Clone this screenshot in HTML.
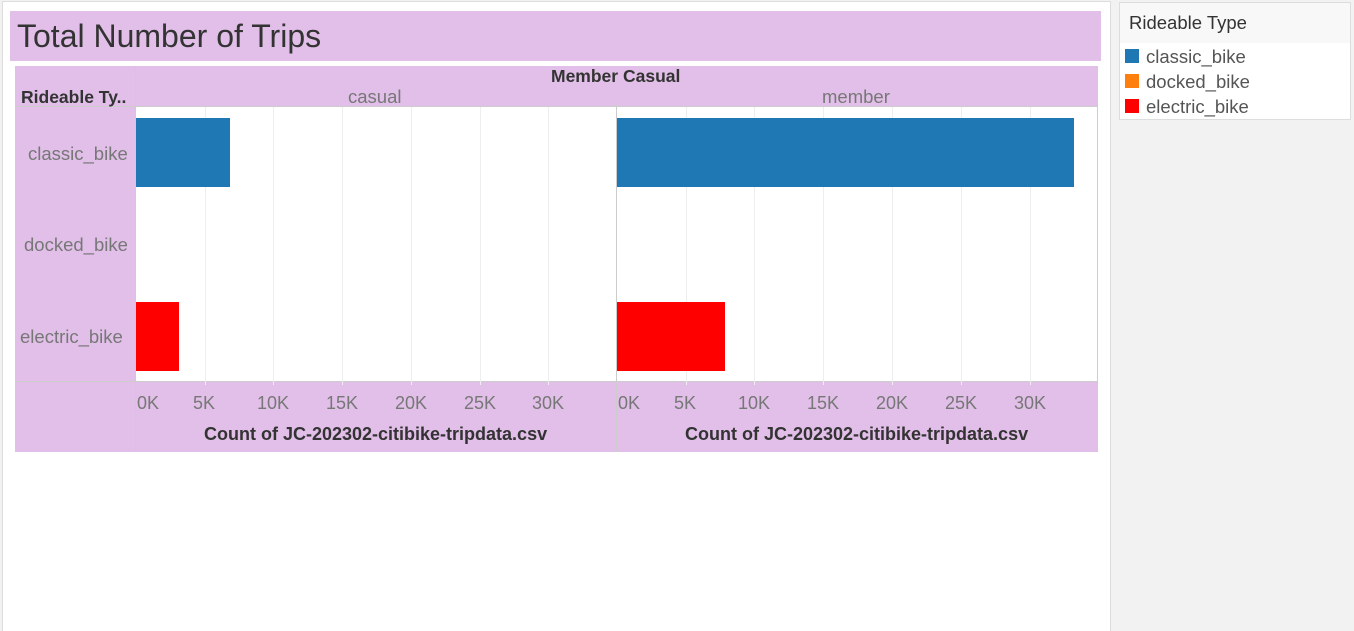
<!DOCTYPE html>
<html><head><style>
*{margin:0;padding:0;box-sizing:border-box}
body{width:1354px;height:631px;background:#f2f2f2;position:relative;overflow:hidden;font-family:"Liberation Sans",sans-serif}
.a{position:absolute}
.t{color:#777;font-size:18.5px;white-space:nowrap}
.x{color:#777;font-size:18px;white-space:nowrap}
</style></head><body>
<div class="a" style="left:2px;top:1px;width:1109px;height:630px;background:#fff;border-left:1px solid #ddd;border-top:1px solid #ddd;border-right:1px solid #ddd"></div>
<div class="a" style="left:10px;top:11px;width:1091px;height:50px;background:#e1bfe8"></div>
<div class="a" style="left:17px;top:18px;font-size:32px;color:#333;font-weight:300">Total Number of Trips</div>
<div class="a" style="left:15px;top:66px;width:1083px;height:386px;background:#e1bfe8"></div>
<div class="a" style="left:135px;top:107px;width:962px;height:274px;background:#fff"></div>
<div class="a" style="left:135px;top:66px;width:1px;height:386px;background:#ccc"></div>
<div class="a" style="left:616px;top:104px;width:1px;height:348px;background:#ccc"></div>
<div class="a" style="left:15px;top:106px;width:1083px;height:1px;background:#ccc"></div>
<div class="a" style="left:15px;top:381px;width:1083px;height:1px;background:#ccc"></div>
<div class="a" style="left:205px;top:107px;width:1px;height:278px;background:#eee"></div>
<div class="a" style="left:273px;top:107px;width:1px;height:278px;background:#eee"></div>
<div class="a" style="left:342px;top:107px;width:1px;height:278px;background:#eee"></div>
<div class="a" style="left:411px;top:107px;width:1px;height:278px;background:#eee"></div>
<div class="a" style="left:480px;top:107px;width:1px;height:278px;background:#eee"></div>
<div class="a" style="left:548px;top:107px;width:1px;height:278px;background:#eee"></div>
<div class="a" style="left:686px;top:107px;width:1px;height:278px;background:#eee"></div>
<div class="a" style="left:754px;top:107px;width:1px;height:278px;background:#eee"></div>
<div class="a" style="left:823px;top:107px;width:1px;height:278px;background:#eee"></div>
<div class="a" style="left:892px;top:107px;width:1px;height:278px;background:#eee"></div>
<div class="a" style="left:961px;top:107px;width:1px;height:278px;background:#eee"></div>
<div class="a" style="left:1030px;top:107px;width:1px;height:278px;background:#eee"></div>
<div class="a" style="left:136px;top:118px;width:94px;height:69px;background:#1f77b4"></div>
<div class="a" style="left:136px;top:302px;width:43px;height:69px;background:#f00"></div>
<div class="a" style="left:617px;top:118px;width:457px;height:69px;background:#1f77b4"></div>
<div class="a" style="left:617px;top:302px;width:108px;height:69px;background:#f00"></div>
<div class="a" style="left:551px;top:66px;font-size:17.5px;font-weight:bold;color:#333">Member Casual</div>
<div class="a t" style="left:348px;top:86px">casual</div>
<div class="a t" style="left:822px;top:86px">member</div>
<div class="a" style="left:21px;top:87px;font-size:17.5px;font-weight:bold;color:#333">Rideable Ty..</div>
<div class="a t" style="left:28px;top:143px">classic_bike</div>
<div class="a t" style="left:24px;top:234px">docked_bike</div>
<div class="a t" style="left:20px;top:326px">electric_bike</div>
<div class="a x" style="left:137px;top:393px">0K</div>
<div class="a x" style="left:193px;top:393px">5K</div>
<div class="a x" style="left:257px;top:393px">10K</div>
<div class="a x" style="left:326px;top:393px">15K</div>
<div class="a x" style="left:395px;top:393px">20K</div>
<div class="a x" style="left:464px;top:393px">25K</div>
<div class="a x" style="left:532px;top:393px">30K</div>
<div class="a x" style="left:618px;top:393px">0K</div>
<div class="a x" style="left:674px;top:393px">5K</div>
<div class="a x" style="left:738px;top:393px">10K</div>
<div class="a x" style="left:807px;top:393px">15K</div>
<div class="a x" style="left:876px;top:393px">20K</div>
<div class="a x" style="left:945px;top:393px">25K</div>
<div class="a x" style="left:1014px;top:393px">30K</div>
<div class="a" style="left:204px;top:424px;font-size:18px;font-weight:bold;color:#333">Count of JC-202302-citibike-tripdata.csv</div>
<div class="a" style="left:685px;top:424px;font-size:18px;font-weight:bold;color:#333">Count of JC-202302-citibike-tripdata.csv</div>
<div class="a" style="left:1119px;top:2px;width:232px;height:118px;background:#fff;border:1px solid #ddd"></div>
<div class="a" style="left:1120px;top:3px;width:230px;height:40px;background:#f8f8f8"></div>
<div class="a" style="left:1129px;top:12px;font-size:18.5px;color:#333">Rideable Type</div>
<div class="a" style="left:1125px;top:49px;width:14px;height:14px;background:#1f77b4"></div>
<div class="a" style="left:1125px;top:74px;width:14px;height:14px;background:#ff7f0e"></div>
<div class="a" style="left:1125px;top:99px;width:14px;height:14px;background:#f00"></div>
<div class="a t" style="left:1146px;top:46px;color:#555">classic_bike</div>
<div class="a t" style="left:1146px;top:71px;color:#555">docked_bike</div>
<div class="a t" style="left:1146px;top:96px;color:#555">electric_bike</div>
</body></html>
